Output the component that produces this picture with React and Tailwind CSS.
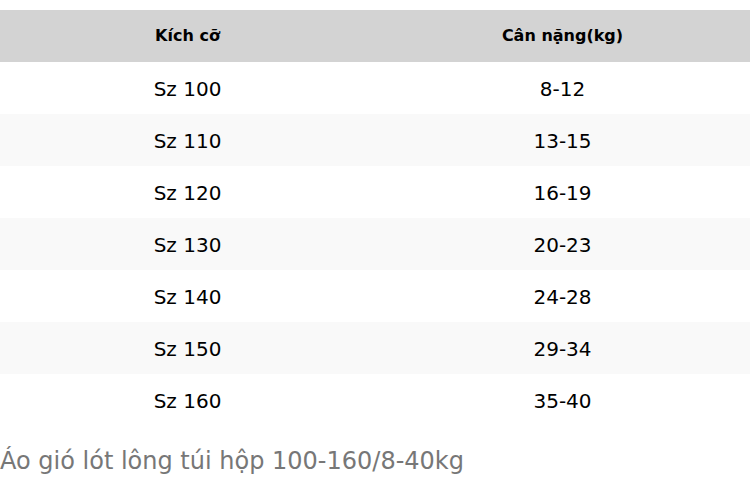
import React from 'react';

const rows = [
  ['Sz 100', '8-12'],
  ['Sz 110', '13-15'],
  ['Sz 120', '16-19'],
  ['Sz 130', '20-23'],
  ['Sz 140', '24-28'],
  ['Sz 150', '29-34'],
  ['Sz 160', '35-40'],
];

export default function App() {
  return (
    <div className="w-[750px] h-[498px] bg-white pt-[10px] font-['DejaVu_Sans',sans-serif] overflow-hidden">
      <table className="w-full border-collapse table-fixed">
        <thead>
          <tr className="bg-[#d3d3d3] h-[52px]">
            <th className="text-[16px] font-bold text-black text-center">Kích cỡ</th>
            <th className="text-[16px] font-bold text-black text-center">Cân nặng(kg)</th>
          </tr>
        </thead>
        <tbody>
          {rows.map(([size, weight], i) => (
            <tr key={size} className={`h-[52px] ${i % 2 === 1 ? 'bg-[#f9f9f9]' : 'bg-white'}`}>
              <td className="text-[20px] text-black text-center pt-[1px]">{size}</td>
              <td className="text-[20px] text-black text-center pt-[1px]">{weight}</td>
            </tr>
          ))}
        </tbody>
      </table>
      <p className="mt-[21px] text-[24px] text-[#777777] leading-[1.2]">Áo gió lót lông túi hộp 100-160/8-40kg</p>
    </div>
  );
}
